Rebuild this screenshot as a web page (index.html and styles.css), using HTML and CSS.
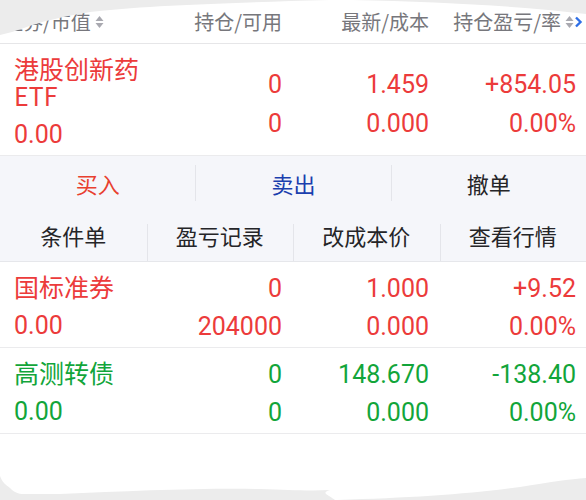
FILE: index.html
```html
<!DOCTYPE html>
<html lang="zh">
<head>
<meta charset="utf-8">
<link rel="stylesheet" href="styles.css">
</head>
<body>
<div class="page">
  <div class="grid head">
    <div class="hc first">证券/市值<svg class="sort" width="9" height="16" viewBox="0 0 9 16"><polygon points="0.5,7 4.5,2 8.5,7" fill="#a9a9b0"/><polygon points="0.5,9 4.5,14 8.5,9" fill="#a9a9b0"/></svg></div>
    <div class="hc">持仓/可用</div>
    <div class="hc">最新/成本</div>
    <div class="hc last">持仓盈亏/率<svg class="sort2" width="19" height="16" viewBox="0 0 19 16"><polygon points="0.5,7 4.5,2 8.5,7" fill="#a9a9b0"/><polygon points="0.5,9 4.5,14 8.5,9" fill="#a9a9b0"/><path d="M11 3.5 L15.5 8 L11 12.5" fill="none" stroke="#2f6fe6" stroke-width="2.4"/></svg></div>
  </div>

  <div class="grid row red">
    <div class="c1"><div class="name">港股创新药ETF</div><div class="val">0.00</div></div>
    <div class="cn wide"><span>0</span><span>0</span></div>
    <div class="cn wide"><span>1.459</span><span>0.000</span></div>
    <div class="cn wide"><span>+854.05</span><span>0.00%</span></div>
  </div>

  <div class="actions">
    <div class="act act3">
      <div class="a buy">买入</div>
      <div class="a sell">卖出</div>
      <div class="a">撤单</div>
    </div>
    <div class="act act4">
      <div class="a">条件单</div>
      <div class="a">盈亏记录</div>
      <div class="a">改成本价</div>
      <div class="a">查看行情</div>
    </div>
  </div>

  <div class="grid row red">
    <div class="c1"><div class="name">国标准券</div><div class="val">0.00</div></div>
    <div class="cn"><span>0</span><span>204000</span></div>
    <div class="cn"><span>1.000</span><span>0.000</span></div>
    <div class="cn"><span>+9.52</span><span>0.00%</span></div>
  </div>

  <div class="grid row green">
    <div class="c1"><div class="name">高测转债</div><div class="val">0.00</div></div>
    <div class="cn"><span>0</span><span>0</span></div>
    <div class="cn"><span>148.670</span><span>0.000</span></div>
    <div class="cn"><span>-138.40</span><span>0.00%</span></div>
  </div>

  <svg class="tear-top" width="586" height="40" viewBox="0 0 586 40">
    <path d="M0 0 L0 35 C8 33 16 31 24 28 C40 22 60 17 90 12 C140 6 220 3 330 0 Z" fill="#ececec"/>
    <path d="M352 0 C440 2 520 6 586 14 L586 0 Z" fill="#ececec"/>
  </svg>
  <svg class="tear-bottom" width="586" height="30" viewBox="0 0 586 30">
    <path d="M0 6 C2 12 6 15 10 18 C14 22 18 24 24 24 L60 24 C130 21 200 18 260 19 C290 20 310 21 330 20 C323 22 325 24 329 26 C332 28 334 29 335 30 L0 30 Z" fill="#ececec"/>
    <path d="M337 30 C410 28 470 24 520 17 C550 12 570 9 586 8 L586 30 Z" fill="#ececec"/>
  </svg>
</div>
</body>
</html>
```

FILE: styles.css
```css
html, body {
  margin: 0;
  padding: 0;
  background: #ffffff;
}
body {
  font-family: "Noto Sans CJK SC", "Noto Sans", sans-serif;
}
.page {
  position: relative;
  width: 586px;
  height: 500px;
  overflow: hidden;
  background: #ffffff;
}
.grid {
  display: grid;
  grid-template-columns: 136px 132px 147px 147px;
  padding: 0 10px 0 14px;
}
.head {
  height: 43px;
  border-bottom: 1px solid #e6e6e8;
  color: #77777c;
  font-size: 20px;
  line-height: 43px;
}
.hc {
  text-align: right;
  white-space: nowrap;
}
.hc.first {
  text-align: left;
  margin-left: -11px;
  display: flex;
  align-items: center;
}
.hc.last {
  display: flex;
  align-items: center;
  justify-content: flex-end;
  margin-right: -8px;
}
.sort {
  margin-left: 4px;
}
.sort2 {
  margin-left: 4px;
}
.row {
  padding-top: 7px;
  padding-bottom: 2px;
  border-bottom: 1px solid #ebebed;
}
.red { color: #ec3b3b; }
.green { color: #12a53a; }
.c1 {
  display: flex;
  flex-direction: column;
}
.name {
  font-size: 25px;
  line-height: 27px;
  padding: 4px 0 4px;
}
.val, .cn {
  font-family: Roboto, "Liberation Sans", sans-serif;
  font-size: 25px;
  line-height: 36px;
}
.val {
  margin-top: 4px;
}
.cn {
  display: flex;
  flex-direction: column;
  justify-content: center;
  align-items: flex-end;
  gap: 2px;
  padding-top: 2px;
}
.cn.wide {
  gap: 3px;
  padding-top: 4px;
}
.actions {
  background: #f5f6fa;
  border-bottom: 1px solid #e6e7eb;
}
.act {
  display: grid;
  color: #252528;
  font-size: 22px;
}
.act3 {
  grid-template-columns: 1fr 1fr 1fr;
  height: 56px;
  align-items: center;
  padding-bottom: 3px;
  box-sizing: border-box;
}
.act4 {
  grid-template-columns: 1fr 1fr 1fr 1fr;
  height: 49px;
  align-items: end;
}
.a {
  text-align: center;
  border-left: 1px solid #e4e5ea;
}
.a:first-child {
  border-left: none;
}
.act3 .a {
  line-height: 36px;
}
.act4 .a {
  line-height: 38px;
  padding-bottom: 7px;
  border-left: none;
  background-image: linear-gradient(#e4e5ea, #e4e5ea);
  background-repeat: no-repeat;
  background-size: 1px 37px;
  background-position: left bottom;
}
.act4 .a:first-child {
  background-image: none;
}
.buy { color: #e8402f; }
.sell { color: #1b3fae; }
.tear-top {
  position: absolute;
  left: 0;
  top: 0;
}
.tear-bottom {
  position: absolute;
  left: 0;
  top: 470px;
}
```
